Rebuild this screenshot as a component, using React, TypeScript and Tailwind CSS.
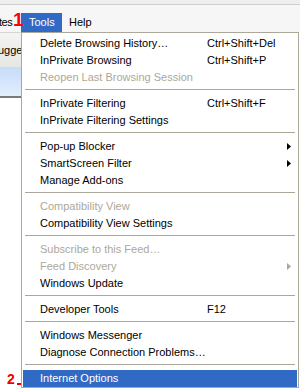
import React from 'react';

type Item = {
  label?: string;
  shortcut?: string;
  disabled?: boolean;
  sub?: boolean;
  sep?: boolean;
  active?: boolean;
};

const items: Item[] = [
  { label: 'Delete Browsing History…', shortcut: 'Ctrl+Shift+Del' },
  { label: 'InPrivate Browsing', shortcut: 'Ctrl+Shift+P' },
  { label: 'Reopen Last Browsing Session', disabled: true },
  { sep: true },
  { label: 'InPrivate Filtering', shortcut: 'Ctrl+Shift+F' },
  { label: 'InPrivate Filtering Settings' },
  { sep: true },
  { label: 'Pop-up Blocker', sub: true },
  { label: 'SmartScreen Filter', sub: true },
  { label: 'Manage Add-ons' },
  { sep: true },
  { label: 'Compatibility View', disabled: true },
  { label: 'Compatibility View Settings' },
  { sep: true },
  { label: 'Subscribe to this Feed…', disabled: true },
  { label: 'Feed Discovery', disabled: true, sub: true },
  { label: 'Windows Update' },
  { sep: true },
  { label: 'Developer Tools', shortcut: 'F12' },
  { sep: true },
  { label: 'Windows Messenger' },
  { label: 'Diagnose Connection Problems…' },
  { sep: true },
  { label: 'Internet Options', active: true },
];

const Arrow = ({ color }: { color: string }) => (
  <svg width="4" height="7" viewBox="0 0 4 7" className="ml-auto mr-[6px]">
    <path d="M0 0 L4 3.5 L0 7 Z" fill={color} />
  </svg>
);

const MenuRow = ({ item }: { item: Item }) => {
  if (item.sep) {
    return (
      <div className="h-[9px] pt-[3px] px-[2px]">
        <div className="h-px bg-[#aca899]" />
      </div>
    );
  }
  const text = item.active ? 'text-white' : item.disabled ? 'text-[#aca899]' : 'text-black';
  return (
    <div className={`flex items-center h-[17px] pl-[17px] ${item.active ? 'bg-[#316ac5]' : ''} ${text}`}>
      <span className="w-[167px] whitespace-nowrap">{item.label}</span>
      {item.shortcut && <span className="whitespace-nowrap">{item.shortcut}</span>}
      {item.sub && <Arrow color={item.disabled ? '#aca899' : '#000000'} />}
    </div>
  );
};

export default function App() {
  return (
    <div
      className="relative w-[300px] h-[390px] overflow-hidden bg-white flex flex-col text-[11px] leading-none"
      style={{ fontFamily: 'Tahoma, "Liberation Sans", Arial, sans-serif' }}
    >
      {/* strip above the menu bar */}
      <div className="h-[5px] bg-[#eeeeee] border-b border-[#cfcfcf]" />

      {/* Menu bar */}
      <div className="h-[27px] bg-[#f6f6f6] flex items-end">
        <div className="h-[19px] w-[13px] flex items-center overflow-hidden">
          <span className="-ml-px tracking-[-0.5px] whitespace-nowrap">tes</span>
        </div>
        <div className="w-[8px]" />
        <div className="h-[19px] w-[41px] bg-[#316ac5] text-white flex items-center pl-[8px]">Tools</div>
        <div className="h-[19px] flex items-center pl-[7px]">Help</div>
      </div>

      <div className="flex flex-1">
        {/* toolbar peeking out left of the menu */}
        <div className="w-[21px] flex flex-col overflow-hidden">
          <div className="h-px bg-[#d6d6d6]" />
          <div className="h-[34px] bg-gradient-to-b from-[#f4f4f2] to-[#e6e6e3] flex items-center overflow-hidden">
            <span className="-ml-[2px] whitespace-nowrap">ugges</span>
          </div>
          <div className="h-[29px] bg-gradient-to-b from-[#c6dcf9] to-[#e3eefc]" />
          <div className="h-[2px] bg-[#7a7a7a]" />
          <div className="flex-1 bg-white" />
        </div>

        {/* Tools dropdown */}
        <div className="w-[278px] h-[356px] border border-[#aca899] bg-white pt-[2px] px-px">
          {items.map((item, i) => (
            <MenuRow key={i} item={item} />
          ))}
        </div>
      </div>

      {/* red step annotations */}
      <span
        className="absolute left-[13px] top-[10px] text-[19px] font-bold text-[#ff0000] leading-none"
        style={{ fontFamily: '"Liberation Sans", Arial, sans-serif' }}
      >
        1
      </span>
      <span
        className="absolute left-[7px] top-[372px] text-[14px] font-bold text-[#ee0000] leading-none"
        style={{ fontFamily: '"Liberation Sans", Arial, sans-serif' }}
      >
        2
      </span>
      <div className="absolute left-[17px] top-[383px] w-[4px] h-[2px] bg-[#ee0000]" />
    </div>
  );
}
